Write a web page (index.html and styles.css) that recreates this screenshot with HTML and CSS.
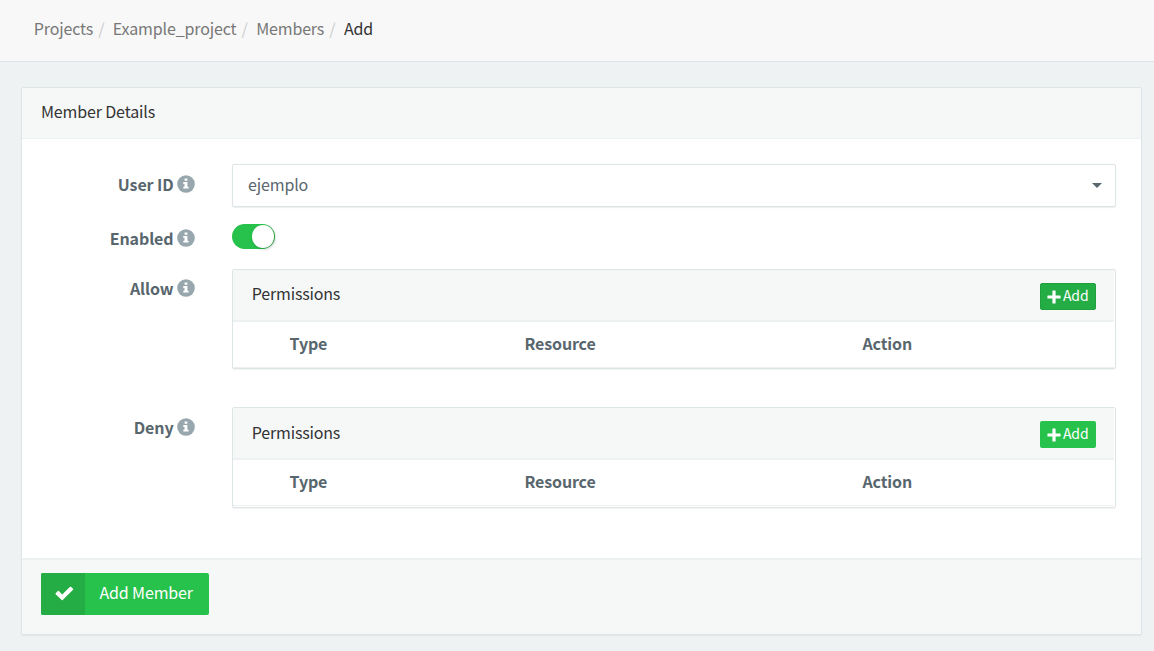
FILE: index.html
```html
<!DOCTYPE html>
<html lang="en">
<head>
<meta charset="utf-8">
<title>Add Member</title>
<link rel="stylesheet" href="styles.css">
</head>
<body>
<svg class="sprite" width="0" height="0" aria-hidden="true">
  <symbol id="info" viewBox="0 0 18 18"><circle cx="9" cy="9" r="8.8" fill="#98a6ad"/><path d="M7.6 3.5h2.8v2.2H7.6zM6.3 7.1h4.1v4.7h1.2v1.8H6.3v-1.8h1.2V8.9H6.3z" fill="#fff"/></symbol>
  <symbol id="plus" viewBox="0 0 14 14"><path d="M5.4.9Q5.4.4 5.9.4h2.2q.5 0 .5.5v4.5h4.5q.5 0 .5.5v2.2q0 .5-.5.5H8.6v4.5q0 .5-.5.5H5.9q-.5 0-.5-.5V8.6H.9q-.5 0-.5-.5V5.9q0-.5.5-.5h4.5z" fill="#fff"/></symbol>
  <symbol id="check" viewBox="0 0 20 15"><path d="M.7 7.2 3 4.9q.5-.4 1 0L7.6 8.5 15.8.5q.5-.4 1 0L19 2.6q.5.5 0 1L8.1 14.3q-.5.4-1 0L.7 8.2q-.5-.5 0-1z" fill="#fff"/></symbol>
</svg>
<nav class="crumbs"><a>Projects</a><i>/</i><a>Example_project</a><i>/</i><a>Members</a><i>/</i><span>Add</span></nav>
<main class="card">
  <header class="card-head">Member Details</header>
  <form class="card-body">
    <div class="row row-user">
      <label>User ID<svg class="info"><use href="#info"/></svg></label>
      <div class="select"><span>ejemplo</span><b class="caret"></b></div>
    </div>
    <div class="row row-enabled">
      <label>Enabled<svg class="info"><use href="#info"/></svg></label>
      <div class="switch"><b class="knob"></b></div>
    </div>
    <div class="row row-allow">
      <label>Allow<svg class="info"><use href="#info"/></svg></label>
      <section class="panel">
        <header class="panel-head"><span class="panel-title">Permissions</span><button type="button" class="add pressed"><svg class="plus"><use href="#plus"/></svg><span>Add</span></button></header>
        <div class="cols"><b>Type</b><b>Resource</b><b>Action</b></div>
      </section>
    </div>
    <div class="row row-deny">
      <label>Deny<svg class="info"><use href="#info"/></svg></label>
      <section class="panel tall">
        <header class="panel-head"><span class="panel-title">Permissions</span><button type="button" class="add"><svg class="plus"><use href="#plus"/></svg><span>Add</span></button></header>
        <div class="cols"><b>Type</b><b>Resource</b><b>Action</b></div>
      </section>
    </div>
  </form>
  <footer class="card-foot">
    <button type="button" class="submit"><span class="submit-icon"><svg class="check"><use href="#check"/></svg></span><span class="submit-text">Add Member</span></button>
  </footer>
</main>
</body>
</html>
```
FILE: styles.css
```css
* { box-sizing: border-box; }
body {
  margin: 0;
  height: 651px;
  overflow: hidden;
  background: #eef2f3;
  color: #58666e;
  font: 16px/24px "Noto Sans CJK SC", "Source Sans Pro", sans-serif;
  letter-spacing: -.14px;
}
.sprite { display: block; }
button { border: 0; padding: 0; font: inherit; letter-spacing: inherit; color: #fff; }
.crumbs {
  display: flex;
  height: 62px;
  padding: 16px 34px 0 33.8px;
  background: #f8f8f8;
  border-bottom: 1px solid #dee5e7;
  color: #777;
}
.crumbs i { width: 19.7px; padding-left: 5px; font-style: normal; color: #ccc; }
.crumbs span { color: #333; }
.card {
  width: 1121px;
  height: 548px;
  margin: 25px 0 0 21px;
  display: flex;
  flex-direction: column;
  background: #fff;
  border: 1px solid #dee5e7;
  border-radius: 2px;
  box-shadow: 0 1px 1px rgba(0, 0, 0, .05);
}
.card-head {
  height: 51px;
  padding: 11px 19px;
  background: #f6f8f8;
  border-bottom: 1px solid #edf1f2;
  color: #333;
}
.card-body { flex: 1; padding: 25px 25px 0 0; }
.row { display: grid; grid-template-columns: 172.5px 884px; column-gap: 37.5px; align-items: start; }
.row label { display: flex; justify-content: flex-end; font-weight: 700; letter-spacing: -.1px; }
.info { width: 18px; height: 18px; margin: 3px 0 0 3px; }
.row-user { height: 60px; }
.row-user label { padding-top: 8px; }
.row-enabled { height: 45px; }
.row-enabled label { padding-top: 2px; }
.row-allow { height: 138px; }
.row-allow label { padding-top: 7px; }
.row-deny label { padding-top: 8px; }
.select {
  height: 43px;
  padding: 0 13px 0 15px;
  display: flex;
  align-items: center;
  justify-content: space-between;
  border: 1px solid #dee5e7;
  border-radius: 2px;
  box-shadow: 0 1px 1px rgba(90, 120, 120, .12);
}
.select span { padding-bottom: 3px; }
.caret { border: 5px solid transparent; border-top-color: #58666e; border-bottom: 0; }
.switch { width: 43px; height: 25px; padding: 1px; display: flex; justify-content: flex-end; background: #27c24c; border-radius: 13px; }
.knob { width: 22.5px; height: 23px; border-radius: 50%; background: #fff; box-shadow: 1px 1px 3px rgba(0, 0, 0, .25); }
.panel { height: 100px; border: 1px solid #dee5e7; border-radius: 2px; box-shadow: 0 1px 1px rgba(0, 0, 0, .05); }
.panel.tall { height: 101px; }
.panel-head {
  height: 52px;
  margin-right: 1px;
  padding: 11px 18px 0 18.8px;
  display: flex;
  justify-content: space-between;
  background: #f6f8f8;
  border-bottom: 2px solid #edf1f2;
  color: #333;
}
.panel-title { letter-spacing: -.18px; }
.tall .panel-title { padding-top: 1px; }
.add { width: 56px; height: 27px; margin-top: 2px; display: flex; align-items: center; padding-left: 7px; gap: 2px; background: #27c24c; border-radius: 2px; font-size: 14px; }
.add span { padding-bottom: 3px; }
.add.pressed { background: #23ad44; border: 1px solid #20a03f; padding-left: 6px; }
.plus { width: 14px; height: 14px; flex: none; }
.cols { display: grid; grid-template-columns: 235px 338px 1fr; height: 46px; margin-right: 1px; padding: 9px 0 0 56.5px; border-bottom: 1px solid #edf1f2; }
.card-foot { height: 76px; padding: 13px 19px; background: #f6f8f8; border-top: 2px solid #edf1f2; }
.submit { display: flex; width: 168px; height: 42px; border-radius: 2px; overflow: hidden; background: #27c24c; }
.submit-icon { width: 44px; height: 42px; display: flex; align-items: center; justify-content: center; background: #23ad44; }
.check { width: 19px; height: 15px; margin: 0 0 2px 2px; }
.submit-text { padding: 7px 0 0 14.5px; }
```
